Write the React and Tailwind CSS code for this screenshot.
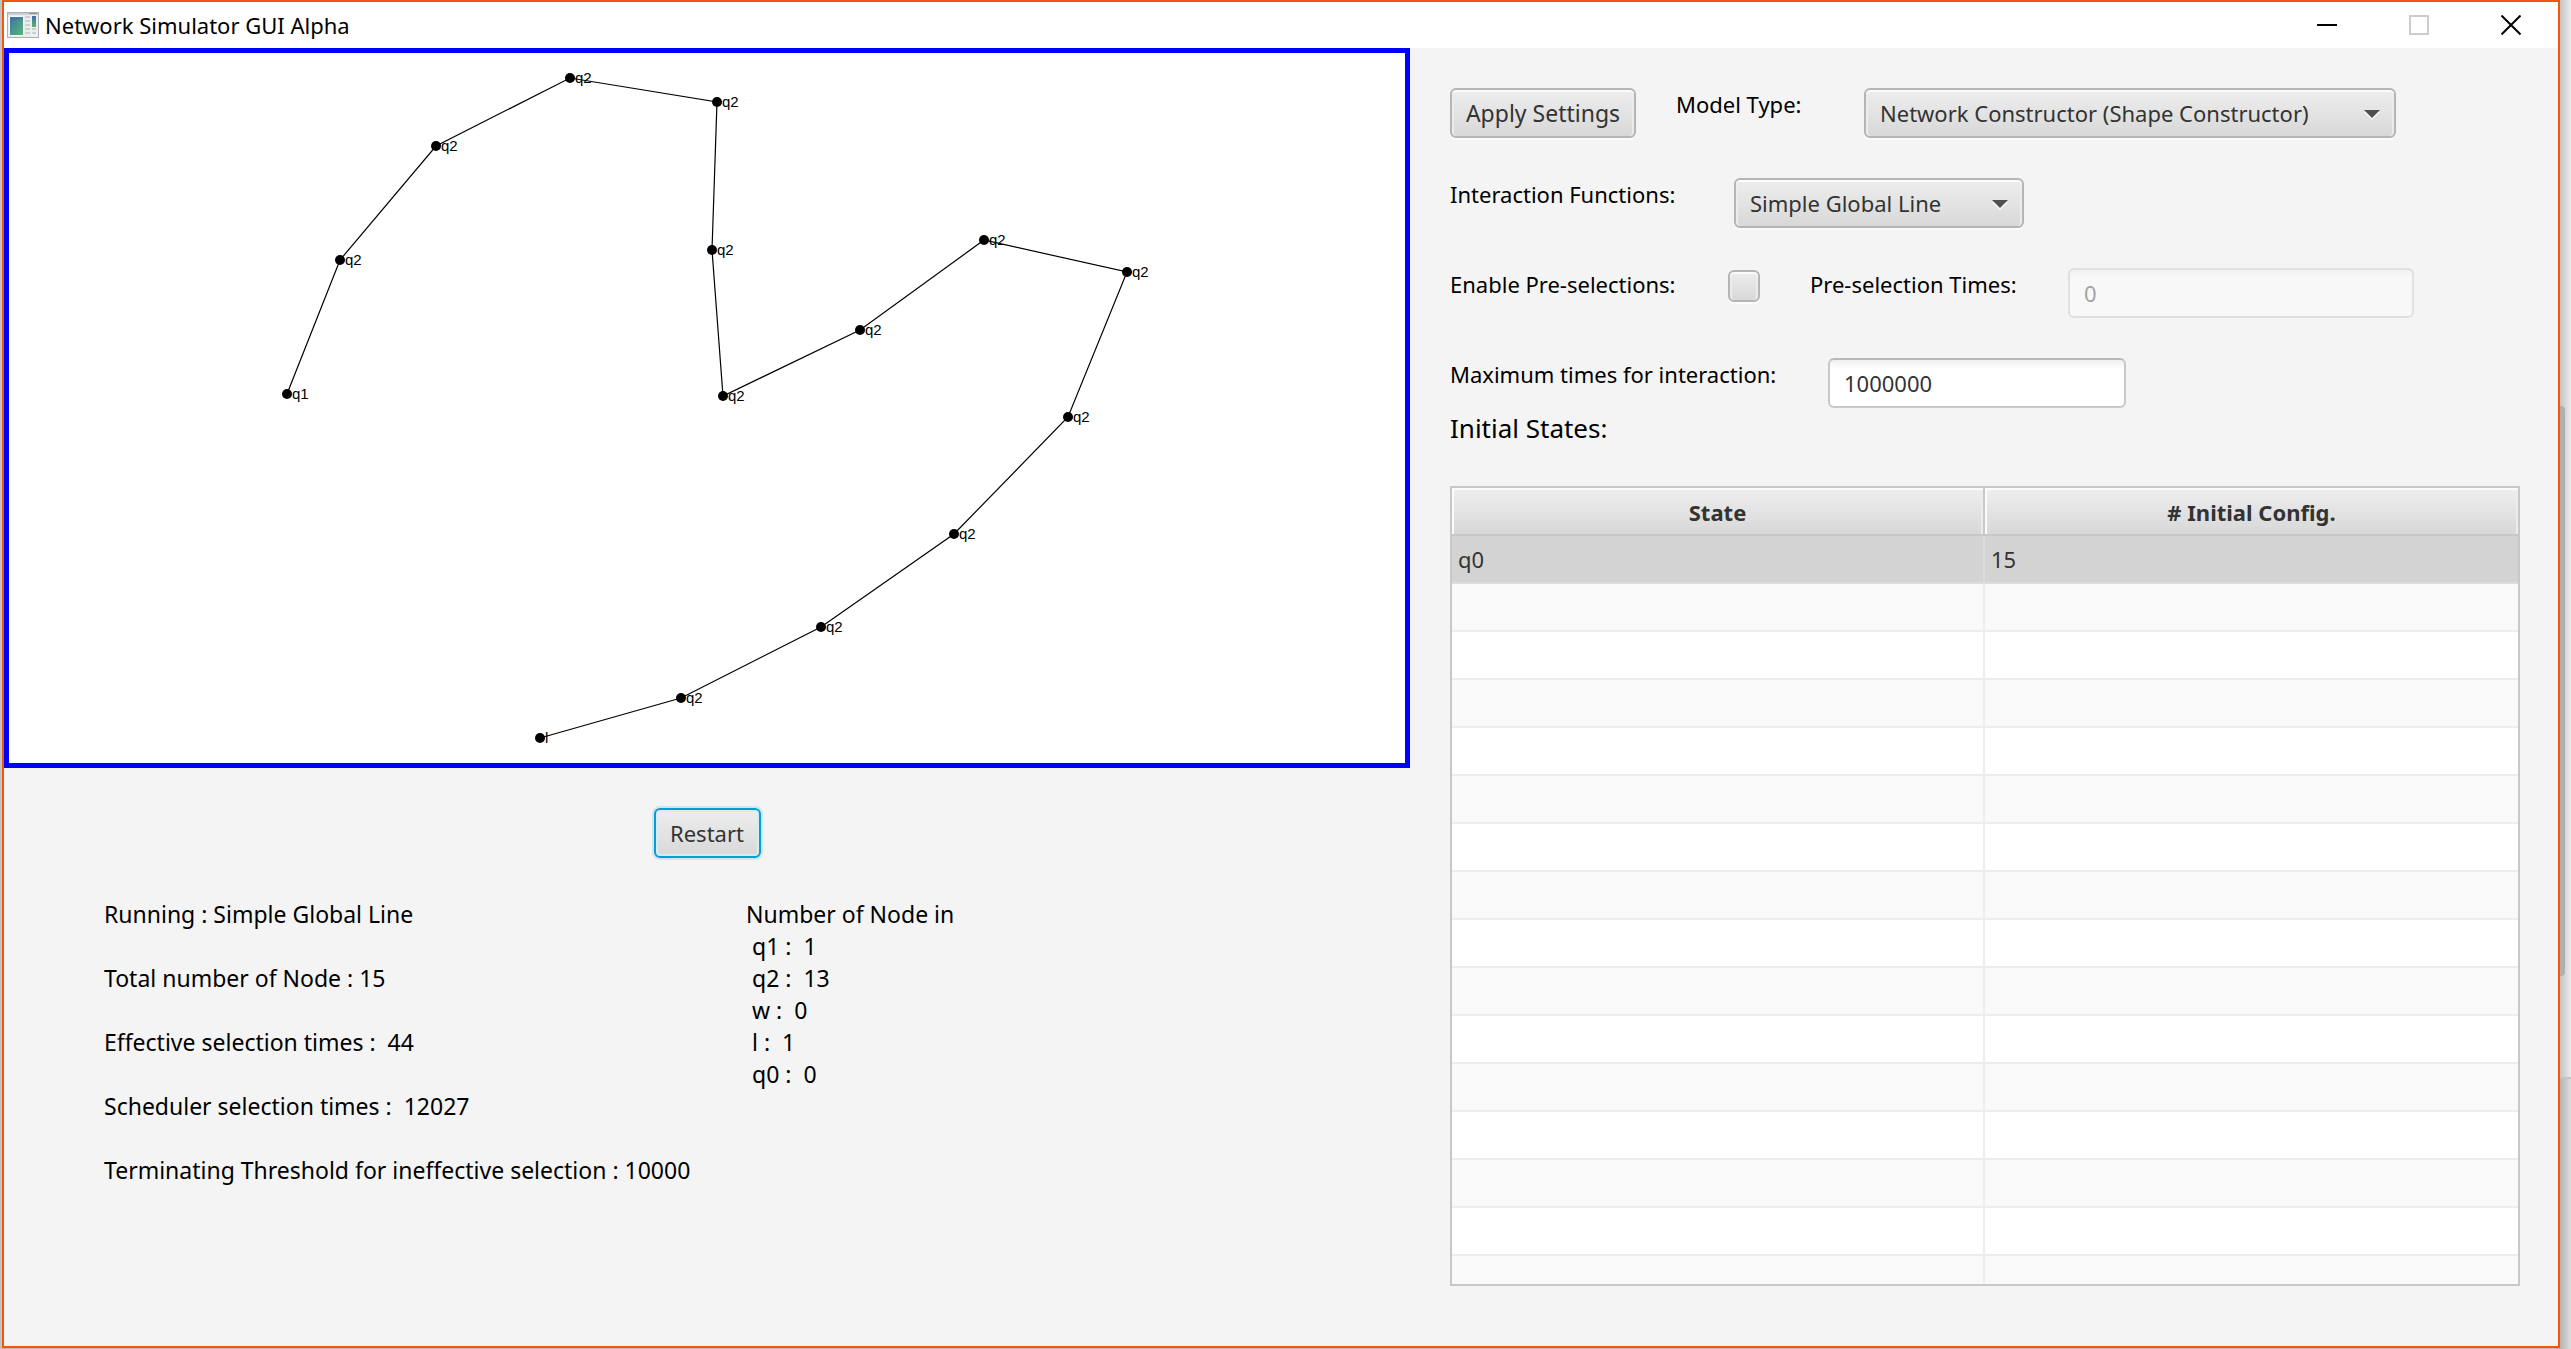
import React, { useState } from "react";

const nodes = [
  [278, 341, "q1"],
  [331, 207, "q2"],
  [427, 93, "q2"],
  [561, 25, "q2"],
  [708, 49, "q2"],
  [703, 197, "q2"],
  [714, 343, "q2"],
  [851, 277, "q2"],
  [975, 187, "q2"],
  [1118, 219, "q2"],
  [1059, 364, "q2"],
  [945, 481, "q2"],
  [812, 574, "q2"],
  [672, 645, "q2"],
  [531, 685, "l"],
];

const face =
  "rounded-md border-2 border-[#b5b5b5] bg-linear-to-b from-[#eeeeee] to-[#d8d8d8] text-[#333333] shadow-[inset_0_2px_0_#fbfbfb,inset_2px_0_0_#ececec,inset_-2px_0_0_#ececec,0_2px_0_#fbfbfb]";

function AppIcon() {
  return (
    <svg className="h-[26px] w-8 shrink-0" viewBox="0 0 32 26" aria-hidden="true">
      <defs>
        <linearGradient id="pane" x1="0" y1="0" x2="1" y2="1">
          <stop offset="0" stopColor="#3f74a8" />
          <stop offset="1" stopColor="#58b575" />
        </linearGradient>
        <linearGradient id="pane2" x1="0" y1="0" x2="0" y2="1">
          <stop offset="0" stopColor="#3a6fb0" />
          <stop offset="1" stopColor="#59b46b" />
        </linearGradient>
      </defs>
      <rect x="0.5" y="0.5" width="31" height="25" fill="#eceeee" stroke="#a9afb3" />
      <rect x="1" y="1" width="30" height="2" fill="#c9d0d4" />
      <rect x="22" y="1" width="8" height="1" fill="#8e9599" />
      <rect x="2" y="4" width="15" height="20" fill="#f8f8f8" />
      <rect x="3" y="5" width="13" height="18" fill="url(#pane)" />
      <path d="M3 11 Q8 7 16 8 V5 H3 Z" fill="#3c6fa6" opacity="0.5" />
      <path d="M18 5h5M18 9h5M18 13h5M18 17h5M18 21h5" stroke="#c3c6c6" strokeWidth="1.5" />
      <rect x="25" y="4" width="4" height="11" fill="url(#pane2)" />
      <path d="M25 17h4M25 21h4" stroke="#c3c6c6" strokeWidth="1.5" />
    </svg>
  );
}

function TitleBar() {
  return (
    <header className="flex h-[46px] shrink-0 items-center bg-white pl-[3px] pr-[37px]">
      <AppIcon />
      <h1 className="ml-1.5 grow text-[22px] leading-8 text-black">Network Simulator GUI Alpha</h1>
      <div className="flex items-center gap-[72px]">
        <button aria-label="Minimize" className="h-5 w-5">
          <svg viewBox="0 0 20 20" className="h-5 w-5"><path d="M0 10h20" stroke="#000" strokeWidth="2" /></svg>
        </button>
        <button aria-label="Maximize" disabled className="h-5 w-5">
          <svg viewBox="0 0 20 20" className="h-5 w-5"><rect x="1" y="1" width="18" height="18" fill="none" stroke="#cccccc" strokeWidth="2" /></svg>
        </button>
        <button aria-label="Close" className="h-5 w-5">
          <svg viewBox="0 0 20 20" className="h-5 w-5"><path d="M0.5 0.5l19 19M19.5 0.5l-19 19" stroke="#000" strokeWidth="2" /></svg>
        </button>
      </div>
    </header>
  );
}

function NetworkCanvas() {
  return (
    <div className="border-[5px] border-[#0000ff] bg-white">
      <svg viewBox="0 0 1396 710" className="block w-full" role="img" aria-label="Network graph">
        <polyline points={nodes.map(([x, y]) => `${x},${y}`).join(" ")} fill="none" stroke="#000" strokeWidth="1.2" />
        {nodes.map(([x, y, name]) => (
          <g key={`${x}-${y}`}>
            <circle cx={x} cy={y} r="5" fill="#000" />
            <text x={x + 5} y={y + 5} className="fill-black font-['Liberation_Sans',sans-serif] text-[15px]">{name}</text>
          </g>
        ))}
      </svg>
    </div>
  );
}

function Select({ id, options, className }) {
  return (
    <div className={`grid ${className}`}>
      <select id={id} className={`col-start-1 row-start-1 h-[50px] w-full appearance-none pl-3.5 pr-12 text-[22px] ${face}`}>
        {options.map((o) => <option key={o}>{o}</option>)}
      </select>
      <svg viewBox="0 0 16 10" className="pointer-events-none col-start-1 row-start-1 mr-4 mt-1 h-2.5 w-4 self-center justify-self-end" aria-hidden="true">
        <path d="M0 2h16L8 10z" fill="#fafafa" />
        <path d="M0 0h16L8 8z" fill="#505050" />
      </svg>
    </div>
  );
}

function Settings() {
  const [checked, setChecked] = useState(false);
  return (
    <div className="flex flex-col pl-10 pr-[38px] pt-10 text-[22px]">
      <div className="flex h-[90px] items-start">
        <button className={`h-[50px] w-[186px] text-[23px] ${face}`}>Apply Settings</button>
        <label htmlFor="model" className="ml-10 w-[188px] leading-8">Model Type:</label>
        <Select id="model" className="w-[532px]" options={["Network Constructor (Shape Constructor)"]} />
      </div>
      <div className="flex h-[90px] items-start">
        <label htmlFor="func" className="w-[284px] leading-8">Interaction Functions:</label>
        <Select id="func" className="w-[290px]" options={["Simple Global Line"]} />
      </div>
      <div className="flex h-[90px] items-start">
        <label htmlFor="pre" className="w-[278px] leading-8">Enable Pre-selections:</label>
        <input id="pre" type="checkbox" checked={checked} onChange={(e) => setChecked(e.target.checked)} className={`mt-0.5 size-8 appearance-none ${face}`} />
        <label htmlFor="times" className="ml-[50px] w-[258px] leading-8">Pre-selection Times:</label>
        <input id="times" disabled={!checked} defaultValue="0" className="h-[50px] w-[346px] rounded-md border-2 border-[#e0e0e0] bg-[#f8f8f8] bg-linear-to-b from-[#f2f2f2] to-[#f8f8f8] to-20% px-3.5 text-[#a3a3a3]" />
      </div>
      <div className="flex h-[50px] items-start">
        <label htmlFor="max" className="w-[378px] leading-8">Maximum times for interaction:</label>
        <input id="max" defaultValue="1000000" className="h-[50px] w-[298px] rounded-md border-2 border-[#c8c8c8] border-t-[#b8b8b8] bg-linear-to-b from-[#f0f0f0] to-white to-20% px-3.5 text-[#333333]" />
      </div>
      <h2 className="text-[26px] leading-10">Initial States:</h2>
    </div>
  );
}

function StateTable() {
  const head = "h-12 border-b-2 border-[#c8c8c8] bg-linear-to-b from-[#efefef] to-[#d8d8d8] px-0 pb-0 pt-0.5 text-center font-bold shadow-[inset_2px_2px_0_#fbfbfb,inset_-2px_0_0_#ececec]";
  return (
    <div className="ml-10 mr-[38px] mb-[60px] mt-[38px] h-0 min-h-[400px] grow overflow-hidden border-2 border-[#c8c8c8] bg-white">
      <table className="w-full table-fixed border-separate border-spacing-0 text-[22px] leading-8 text-[#333333]">
        <thead>
          <tr>
            <th className={`${head} border-r-2`}>State</th>
            <th className={head}># Initial Config.</th>
          </tr>
        </thead>
        <tbody>
          <tr className="bg-[#d3d3d3]">
            <td className="h-12 border-b-2 border-r-2 border-[#dcdcdc] px-1.5 py-0">q0</td>
            <td className="h-12 border-b-2 border-[#dcdcdc] px-1.5 py-0">15</td>
          </tr>
          {Array.from({ length: 15 }, (_, i) => (
            <tr key={i} className="odd:bg-white even:bg-[#f9f9f9]">
              <td className="h-12 border-b-2 border-r-2 border-[#ededed] p-0" />
              <td className="h-12 border-b-2 border-[#ededed] p-0" />
            </tr>
          ))}
        </tbody>
      </table>
    </div>
  );
}

function Stats() {
  return (
    <div className="mt-10 grid grid-cols-[642fr_664fr] pl-[100px] text-[23px] leading-8 text-black">
      <div className="flex flex-col gap-8 whitespace-pre">
        <p>Running : Simple Global Line</p>
        <p>Total number of Node : 15</p>
        <p>{"Effective selection times :  44"}</p>
        <p>{"Scheduler selection times :  12027"}</p>
        <p>Terminating Threshold for ineffective selection : 10000</p>
      </div>
      <div className="whitespace-pre">
        <p>Number of Node in</p>
        <p>{" q1 :  1"}</p>
        <p>{" q2 :  13"}</p>
        <p>{" w :  0"}</p>
        <p>{" l :  1"}</p>
        <p>{" q0 :  0"}</p>
      </div>
    </div>
  );
}

export default function App() {
  return (
    <div className="flex min-h-screen bg-[#b8b8b8] font-['Noto_Sans',sans-serif] text-black">
      <div className="w-0.5 shrink-0 bg-[#c4c4c4]" />
      <div className="mb-px flex grow flex-col border-2 border-[#f4560f] bg-[#f4f4f4]">
        <TitleBar />
        <main className="grid grow grid-cols-[1406fr_1148fr]">
          <section>
            <NetworkCanvas />
            <div className="mt-10 flex justify-center">
              <button className="h-[50px] w-[107px] rounded-md border-2 border-[#039ed3] bg-linear-to-b from-[#eeeeee] to-[#d8d8d8] text-[22px] text-[#333333] shadow-[inset_0_0_0_2px_#d9ebf2,0_0_0_2px_#cde7f0]">Restart</button>
            </div>
            <Stats />
          </section>
          <section className="flex flex-col">
            <Settings />
            <StateTable />
          </section>
        </main>
      </div>
      <div className="flex w-[11px] shrink-0 flex-col">
        <div className="flex grow-[1077] flex-col bg-linear-to-r from-[#c4c4c4] to-[#ececec]">
          <div className="grow-[406]" />
          <div className="mr-1.5 grow-[570] rounded-r-sm bg-[#b0b0b0]" />
          <div className="grow-[101]" />
        </div>
        <div className="h-0.5 bg-[#c4c4c4]" />
        <div className="grow-[270] bg-linear-to-r from-[#b4b4b4] to-[#dddddd]" />
      </div>
    </div>
  );
}
